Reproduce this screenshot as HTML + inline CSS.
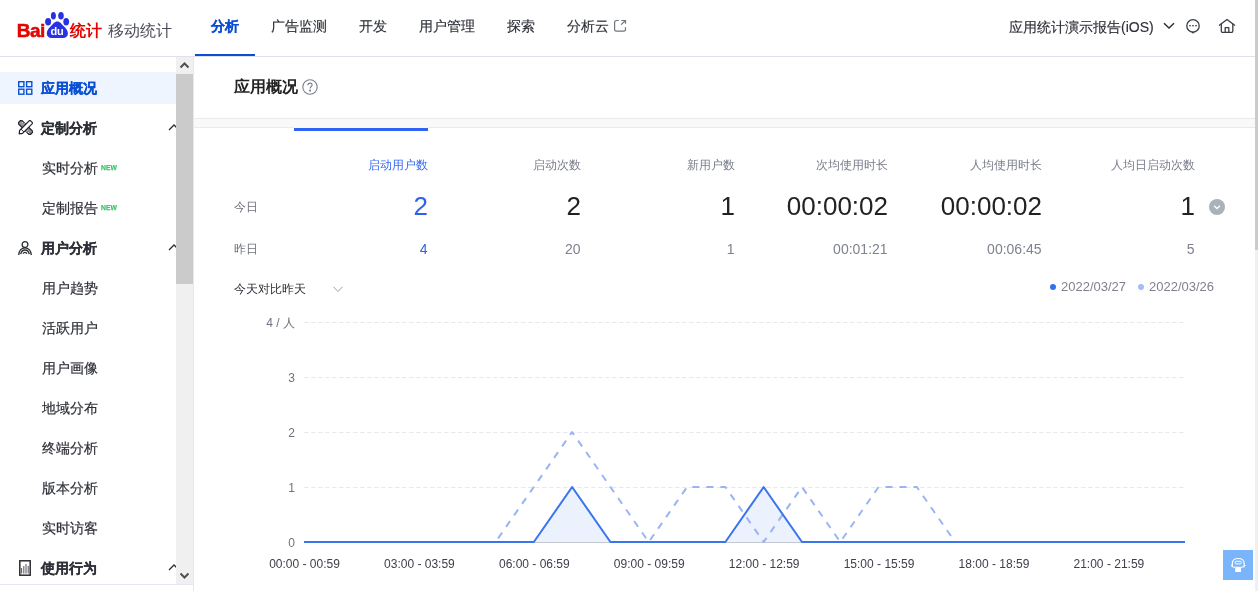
<!DOCTYPE html>
<html><head><meta charset="utf-8">
<style>
*{box-sizing:border-box;margin:0;padding:0}
html,body{width:1258px;height:591px;overflow:hidden;background:#fff;will-change:transform;font-family:"Liberation Sans",sans-serif;color:#2e3038}
.a{position:absolute;white-space:nowrap}
#hdr{position:absolute;left:0;top:0;width:1255px;height:57px;border-bottom:1px solid #dde1ea;background:#fff}
.nav{position:absolute;top:0;height:56px;line-height:52px;font-size:14px;color:#2e3038;-webkit-text-stroke:0.15px currentColor}
.nav.on{color:#0b4fd3;font-weight:bold}
#side{position:absolute;left:0;top:57px;width:194px;height:534px;border-right:1px solid #e6e8ee}
.si{position:absolute;left:0;width:176px;height:32px;line-height:32px;font-size:14px;color:#2e3038;-webkit-text-stroke:0.2px currentColor}
.si.g{font-weight:bold}
.si.act{background:#eff5fe;color:#0b4fd3}
.si .t{position:absolute;left:41px;top:0}
.si.sub .t{left:42px}
.new{position:absolute;left:101px;top:0;color:#3cc46a;font-size:8px;font-weight:bold;-webkit-text-stroke:0.25px #3cc46a;display:inline-block;transform:scaleX(.85);transform-origin:left;line-height:8px;margin-top:12px}
.car{position:absolute;left:168px;top:12px;width:12px;height:7px}
.hd{position:absolute;font-size:12px;color:#7a7e8a;text-align:right;line-height:14px}
.vt{position:absolute;font-size:26px;color:#222;text-align:right;line-height:30px;margin-top:-1px}
.vy{position:absolute;font-size:14px;color:#7e828e;text-align:right;line-height:16px;margin-left:-0.4px}
</style></head><body>

<div id="hdr">
  <!-- logo -->
  <div class="a" style="left:16.8px;top:20px;font-size:19px;font-weight:bold;color:#e10601;line-height:22px;letter-spacing:-0.6px;-webkit-text-stroke:0.5px #e10601">Bai</div>
  <svg class="a" style="left:45px;top:12px" width="25" height="27" viewBox="0 0 25 27">
    <ellipse cx="8.4" cy="3.8" rx="2.5" ry="3.8" fill="#2932e1"/>
    <ellipse cx="16" cy="3.8" rx="2.8" ry="3.8" fill="#2932e1"/>
    <ellipse cx="3.1" cy="9.8" rx="3" ry="3.7" fill="#2932e1"/>
    <ellipse cx="21.2" cy="9.8" rx="2.9" ry="3.7" fill="#2932e1"/>
    <path d="M12.3 9.4 C9.5 9.4 8 12 5.5 14.5 C3 17 1.8 19 1.8 21.5 C1.8 24.5 4 25.9 6.5 25.9 L18 25.9 C20.8 25.9 22.9 24.5 22.9 21.5 C22.9 19 21.6 17 19.1 14.5 C16.6 12 15.1 9.4 12.3 9.4Z" fill="#2932e1"/>
    <text x="11.9" y="23.4" font-family="Liberation Sans" font-size="11" font-weight="bold" fill="#fff" text-anchor="middle" letter-spacing="-0.3">du</text>
  </svg>
  <div class="a" style="left:70px;top:19px;font-size:16px;font-weight:bold;color:#e10601;line-height:24px">统计</div>
  <div class="a" style="left:108px;top:19px;font-size:16px;color:#4a4d57;line-height:24px">移动统计</div>

  <div class="nav on" style="left:195px;width:60px;text-align:center">分析</div>
  <div class="a" style="left:195px;top:54px;width:60px;height:2px;background:#0b4fd3"></div>
  <div class="nav" style="left:271px">广告监测</div>
  <div class="nav" style="left:359px">开发</div>
  <div class="nav" style="left:419px">用户管理</div>
  <div class="nav" style="left:507px">探索</div>
  <div class="nav" style="left:567px">分析云</div>
  <svg class="a" style="left:613px;top:19px" width="14" height="14" viewBox="0 0 14 14" fill="none" stroke="#6e7480" stroke-width="1.2"><path d="M5.8 1.5 H3.5 Q1.6 1.5 1.6 3.4 V10.3 Q1.6 12.2 3.5 12.2 H10.6 Q12.5 12.2 12.5 10.3 V8.3"/><path d="M8.3 1.5 H12.5 V4.7"/><path d="M12.3 1.7 L8.1 5.6"/></svg>

  <div class="a" style="left:1009px;top:18px;font-size:14px;line-height:18px;color:#2e3038;-webkit-text-stroke:0.15px #2e3038">应用统计演示报告(iOS)</div>
  <svg class="a" style="left:1163px;top:22px" width="12" height="8" viewBox="0 0 12 8" fill="none" stroke="#2e3038" stroke-width="1.5">
    <path d="M1 1.2 L6 6 L11 1.2"/>
  </svg>
  <svg class="a" style="left:1185px;top:18px" width="16" height="17" viewBox="0 0 16 17" fill="none" stroke="#3a3d46" stroke-width="1.3"><circle cx="8" cy="7.9" r="6.2"/><path d="M4 7.7 H6 M7 7.7 H9 M10 7.7 H12" stroke-width="1.1"/><path d="M6.9 13.9 L8 15 L9.1 13.9" stroke-width="1.1"/></svg>
  <svg class="a" style="left:1218px;top:18px" width="18" height="16" viewBox="0 0 18 16" fill="none" stroke="#3a3d46" stroke-width="1.3" stroke-linejoin="round" stroke-linecap="round"><path d="M1.4 7.2 L9 1.4 L16.6 7.2"/><path d="M3.3 5.9 V13.3 Q3.3 14.3 4.3 14.3 H13.8 Q14.8 14.3 14.8 13.3 V5.9"/><path d="M7.2 14.3 V9.6 H10.8 V14.3"/></svg>
</div>

<div id="side">
<div class="si g act" style="top:15px"><svg class="a" style="left:18px;top:9px" width="15" height="14" viewBox="0 0 15 14" fill="none" stroke="#0b4fd3" stroke-width="1.4"><rect x="0.7" y="0.7" width="5.2" height="5" /><rect x="8.6" y="0.7" width="5.2" height="5"/><rect x="0.7" y="8.2" width="5.2" height="5"/><rect x="8.6" y="8.2" width="5.2" height="5"/></svg><span class="t">应用概况</span></div>
<div class="si g" style="top:55px"><svg class="a" style="left:18px;top:8px" width="15" height="15" viewBox="0 0 15 15" stroke="#1f2126" stroke-width="1.2" stroke-linejoin="round"><g transform="rotate(45 7.5 7.5)"><rect x="-1" y="5.1" width="17" height="4.8" fill="#8d8f94"/><path d="M2 5.1 V7 M4 5.1 V6.6 M11 9.9 V8.3 M13 9.9 V8.3" stroke-width="0.9" stroke="#fff"/></g><g transform="rotate(-45 7.5 7.5)"><path d="M1.2 5.4 H15.8 V9.6 H1.2 L-1.4 7.5 Z" fill="#fff"/><path d="M3.2 5.4 V9.6" stroke-width="0.9"/></g></svg><span class="t">定制分析</span><svg class="car" viewBox="0 0 12 7" fill="none" stroke="#2a2c33" stroke-width="1.3"><path d="M1 6 L6 1 L11 6"/></svg></div>
<div class="si sub" style="top:95px"><span class="t">实时分析</span><span class="new">NEW</span></div>
<div class="si sub" style="top:135px"><span class="t">定制报告</span><span class="new">NEW</span></div>
<div class="si g" style="top:175px"><svg class="a" style="left:18px;top:9px" width="14" height="14" viewBox="0 0 14 14" fill="none" stroke="#2a2c33" stroke-width="1.3"><circle cx="7" cy="3.6" r="2.9"/><path d="M0.7 14 C0.7 9.8 3.5 6.8 7 6.8 C10.5 6.8 13.3 9.8 13.3 14"/><path d="M2.7 13.2 C3.2 10.6 5 9 7 9 C9 9 10.8 10.6 11.3 13.2"/><path d="M5 12.6 C5.5 11.8 6.2 11.3 7 11.3 C7.8 11.3 8.5 11.8 9 12.6"/></svg><span class="t">用户分析</span><svg class="car" viewBox="0 0 12 7" fill="none" stroke="#2a2c33" stroke-width="1.3"><path d="M1 6 L6 1 L11 6"/></svg></div>
<div class="si sub" style="top:215px"><span class="t">用户趋势</span></div>
<div class="si sub" style="top:255px"><span class="t">活跃用户</span></div>
<div class="si sub" style="top:295px"><span class="t">用户画像</span></div>
<div class="si sub" style="top:335px"><span class="t">地域分布</span></div>
<div class="si sub" style="top:375px"><span class="t">终端分析</span></div>
<div class="si sub" style="top:415px"><span class="t">版本分析</span></div>
<div class="si sub" style="top:455px"><span class="t">实时访客</span></div>
<div class="si g" style="top:495px"><svg class="a" style="left:19px;top:8px" width="12" height="16" viewBox="0 0 12 16" fill="none" stroke="#2a2c33"><rect x="0.8" y="0.8" width="10.4" height="14.4" stroke-width="1.5"/><path d="M2.6 13.6 V8 M4.8 13.6 V6 M7 13.6 V4 M9.2 13.6 V6" stroke="#666" stroke-width="1.1"/></svg><span class="t">使用行为</span><svg class="car" viewBox="0 0 12 7" fill="none" stroke="#2a2c33" stroke-width="1.3"><path d="M1 6 L6 1 L11 6"/></svg></div>
<div class="a" style="left:176px;top:0;width:17px;height:527px;background:#f0f0f0"></div>
<div class="a" style="left:176px;top:17px;width:17px;height:210px;background:#cbcbcb"></div>
<svg class="a" style="left:176px;top:0" width="17" height="17" viewBox="0 0 17 17"><path d="M4.5 10.5 L8.5 6.5 L12.5 10.5" fill="none" stroke="#505050" stroke-width="2"/></svg>
<svg class="a" style="left:176px;top:510px" width="17" height="17" viewBox="0 0 17 17"><path d="M4.5 6.5 L8.5 10.5 L12.5 6.5" fill="none" stroke="#505050" stroke-width="2"/></svg>
<div class="a" style="left:0;top:527px;width:193px;height:1px;background:#e4e7ee"></div>
</div>


<!-- main title -->
<div class="a" style="left:234px;top:77px;font-size:16px;font-weight:bold;color:#222;line-height:20px">应用概况</div>
<svg class="a" style="left:302px;top:79px" width="16" height="16" viewBox="0 0 16 16" fill="none" stroke="#7a7f8c" stroke-width="1.1">
  <circle cx="8" cy="8" r="7.2"/>
  <path d="M5.9 6.2 C5.9 4.9 6.8 4.1 8 4.1 C9.2 4.1 10.1 4.9 10.1 6 C10.1 7.4 8.1 7.6 8.1 9.4" />
  <circle cx="8.1" cy="11.6" r="0.5" fill="#7a7f8c"/>
</svg>
<div class="a" style="left:194px;top:118px;width:1061px;height:10px;background:#f9f9fa;border-top:1px solid #e8eaf0;border-bottom:1px solid #e8eaf0"></div>
<div class="a" style="left:294px;top:127px;width:134px;height:1px;background:#f9f9fa"></div>
<div class="a" style="left:294px;top:128px;width:134px;height:3px;background:#2f63f5"></div>
<div class="hd" style="left:288px;top:158px;width:140px;color:#3a6cf0">启动用户数</div>
<div class="vt" style="left:288px;top:192px;width:140px;color:#2f62ea">2</div>
<div class="vy" style="left:288px;top:241px;width:140px;color:#2f62ea">4</div>
<div class="hd" style="left:441px;top:158px;width:140px">启动次数</div>
<div class="vt" style="left:441px;top:192px;width:140px">2</div>
<div class="vy" style="left:441px;top:241px;width:140px">20</div>
<div class="hd" style="left:595px;top:158px;width:140px">新用户数</div>
<div class="vt" style="left:595px;top:192px;width:140px">1</div>
<div class="vy" style="left:595px;top:241px;width:140px">1</div>
<div class="hd" style="left:748px;top:158px;width:140px">次均使用时长</div>
<div class="vt" style="left:748px;top:192px;width:140px">00:00:02</div>
<div class="vy" style="left:748px;top:241px;width:140px">00:01:21</div>
<div class="hd" style="left:902px;top:158px;width:140px">人均使用时长</div>
<div class="vt" style="left:902px;top:192px;width:140px">00:00:02</div>
<div class="vy" style="left:902px;top:241px;width:140px">00:06:45</div>
<div class="hd" style="left:1055px;top:158px;width:140px">人均日启动次数</div>
<div class="vt" style="left:1055px;top:192px;width:140px">1</div>
<div class="vy" style="left:1055px;top:241px;width:140px">5</div>
<div class="a" style="left:234px;top:200px;font-size:12px;color:#6f7380;line-height:14px">今日</div>
<div class="a" style="left:234px;top:242px;font-size:12px;color:#6f7380;line-height:14px">昨日</div>
<svg class="a" style="left:1209px;top:199px" width="16" height="16" viewBox="0 0 16 16"><circle cx="8" cy="8" r="8" fill="#aab1bb"/><path d="M5 6.8 L8 9.6 L11 6.8" fill="none" stroke="#fff" stroke-width="1.3"/></svg>
<div class="a" style="left:234px;top:282px;font-size:12px;color:#2e3038;line-height:14px">今天对比昨天</div>
<svg class="a" style="left:333px;top:286px" width="10" height="7" viewBox="0 0 10 7"><path d="M0.5 0.8 L5 5.5 L9.5 0.8" fill="none" stroke="#999ea8" stroke-width="1"/></svg>
<div class="a" style="left:1050px;top:284px;width:6px;height:6px;border-radius:50%;background:#3370ee"></div>
<div class="a" style="left:1061px;top:279px;font-size:13px;color:#7e828e;line-height:16px">2022/03/27</div>
<div class="a" style="left:1138px;top:284px;width:6px;height:6px;border-radius:50%;background:#a4bcf7"></div>
<div class="a" style="left:1149px;top:279px;font-size:13px;color:#7e828e;line-height:16px">2022/03/26</div>

<svg class="a" style="left:0;top:0" width="1258" height="591" viewBox="0 0 1258 591">
<line x1="304" y1="487.5" x2="1185" y2="487.5" stroke="#e6e9ee" stroke-width="1" stroke-dasharray="4.5 2.5"/>
<line x1="304" y1="432.5" x2="1185" y2="432.5" stroke="#e6e9ee" stroke-width="1" stroke-dasharray="4.5 2.5"/>
<line x1="304" y1="377.5" x2="1185" y2="377.5" stroke="#e6e9ee" stroke-width="1" stroke-dasharray="4.5 2.5"/>
<line x1="304" y1="322.5" x2="1185" y2="322.5" stroke="#e6e9ee" stroke-width="1" stroke-dasharray="4.5 2.5"/>
<line x1="304" y1="542.5" x2="1185" y2="542.5" stroke="#c6c9cf" stroke-width="1"/>
<polygon points="304.00,542 304.00,542.00 342.30,542.00 380.61,542.00 418.91,542.00 457.22,542.00 495.52,542.00 533.83,542.00 572.13,487.00 610.43,542.00 648.74,542.00 687.04,542.00 725.35,542.00 763.65,487.00 801.96,542.00 840.26,542.00 878.57,542.00 916.87,542.00 955.17,542.00 993.48,542.00 1031.78,542.00 1070.09,542.00 1108.39,542.00 1146.70,542.00 1185.00,542.00 1185.00,542" fill="#ebf1fd"/>
<polyline points="304.00,542.00 342.30,542.00 380.61,542.00 418.91,542.00 457.22,542.00 495.52,542.00 533.83,487.00 572.13,432.00 610.43,487.00 648.74,542.00 687.04,487.00 725.35,487.00 763.65,542.00 801.96,487.00 840.26,542.00 878.57,487.00 916.87,487.00 955.17,542.00 993.48,542.00 1031.78,542.00 1070.09,542.00 1108.39,542.00 1146.70,542.00 1185.00,542.00" fill="none" stroke="#98b4f5" stroke-width="2" stroke-dasharray="7 7" stroke-linejoin="round"/>
<polyline points="304.00,542.00 342.30,542.00 380.61,542.00 418.91,542.00 457.22,542.00 495.52,542.00 533.83,542.00 572.13,487.00 610.43,542.00 648.74,542.00 687.04,542.00 725.35,542.00 763.65,487.00 801.96,542.00 840.26,542.00 878.57,542.00 916.87,542.00 955.17,542.00 993.48,542.00 1031.78,542.00 1070.09,542.00 1108.39,542.00 1146.70,542.00 1185.00,542.00" fill="none" stroke="#3a74ee" stroke-width="2" stroke-linejoin="round"/>
<text x="295" y="327.0" font-family="Liberation Sans" font-size="12" fill="#6e7380" text-anchor="end">4 / 人</text>
<text x="295" y="382.0" font-family="Liberation Sans" font-size="12" fill="#6e7380" text-anchor="end">3</text>
<text x="295" y="437.0" font-family="Liberation Sans" font-size="12" fill="#6e7380" text-anchor="end">2</text>
<text x="295" y="492.0" font-family="Liberation Sans" font-size="12" fill="#6e7380" text-anchor="end">1</text>
<text x="295" y="547.0" font-family="Liberation Sans" font-size="12" fill="#6e7380" text-anchor="end">0</text>
<text x="304.50" y="568" font-family="Liberation Sans" font-size="12" fill="#3e414a" text-anchor="middle">00:00 - 00:59</text>
<text x="419.41" y="568" font-family="Liberation Sans" font-size="12" fill="#3e414a" text-anchor="middle">03:00 - 03:59</text>
<text x="534.33" y="568" font-family="Liberation Sans" font-size="12" fill="#3e414a" text-anchor="middle">06:00 - 06:59</text>
<text x="649.24" y="568" font-family="Liberation Sans" font-size="12" fill="#3e414a" text-anchor="middle">09:00 - 09:59</text>
<text x="764.15" y="568" font-family="Liberation Sans" font-size="12" fill="#3e414a" text-anchor="middle">12:00 - 12:59</text>
<text x="879.07" y="568" font-family="Liberation Sans" font-size="12" fill="#3e414a" text-anchor="middle">15:00 - 15:59</text>
<text x="993.98" y="568" font-family="Liberation Sans" font-size="12" fill="#3e414a" text-anchor="middle">18:00 - 18:59</text>
<text x="1108.89" y="568" font-family="Liberation Sans" font-size="12" fill="#3e414a" text-anchor="middle">21:00 - 21:59</text>
</svg>
<div class="a" style="left:1255px;top:0;width:3px;height:591px;background:#f0f0f0"></div>
<div class="a" style="left:1255px;top:0;width:3px;height:250px;background:#cbcbcb"></div>
<div class="a" style="left:1223px;top:550px;width:30px;height:30px;background:#7ab4fb"></div>
<svg class="a" style="left:1223px;top:550px" width="30" height="30" viewBox="0 0 30 30" fill="none" stroke="#fff">
  <path d="M9.3 16.8 V13.5 C9.3 10.3 11.8 8.5 15.2 8.5 C18.6 8.5 21.1 10.3 21.1 13.5 V16.8 C19 17.6 11.4 17.6 9.3 16.8Z" stroke-width="1.2"/>
  <rect x="12" y="11.3" width="6.4" height="2.6" rx="1.2" stroke-width="1"/>
  <path d="M8 15.5 H9.3 M21.1 15.5 H22.4" stroke-width="1"/>
  <rect x="12.2" y="18" width="5.8" height="4" fill="#fff" stroke="none"/>
</svg>

</body></html>
